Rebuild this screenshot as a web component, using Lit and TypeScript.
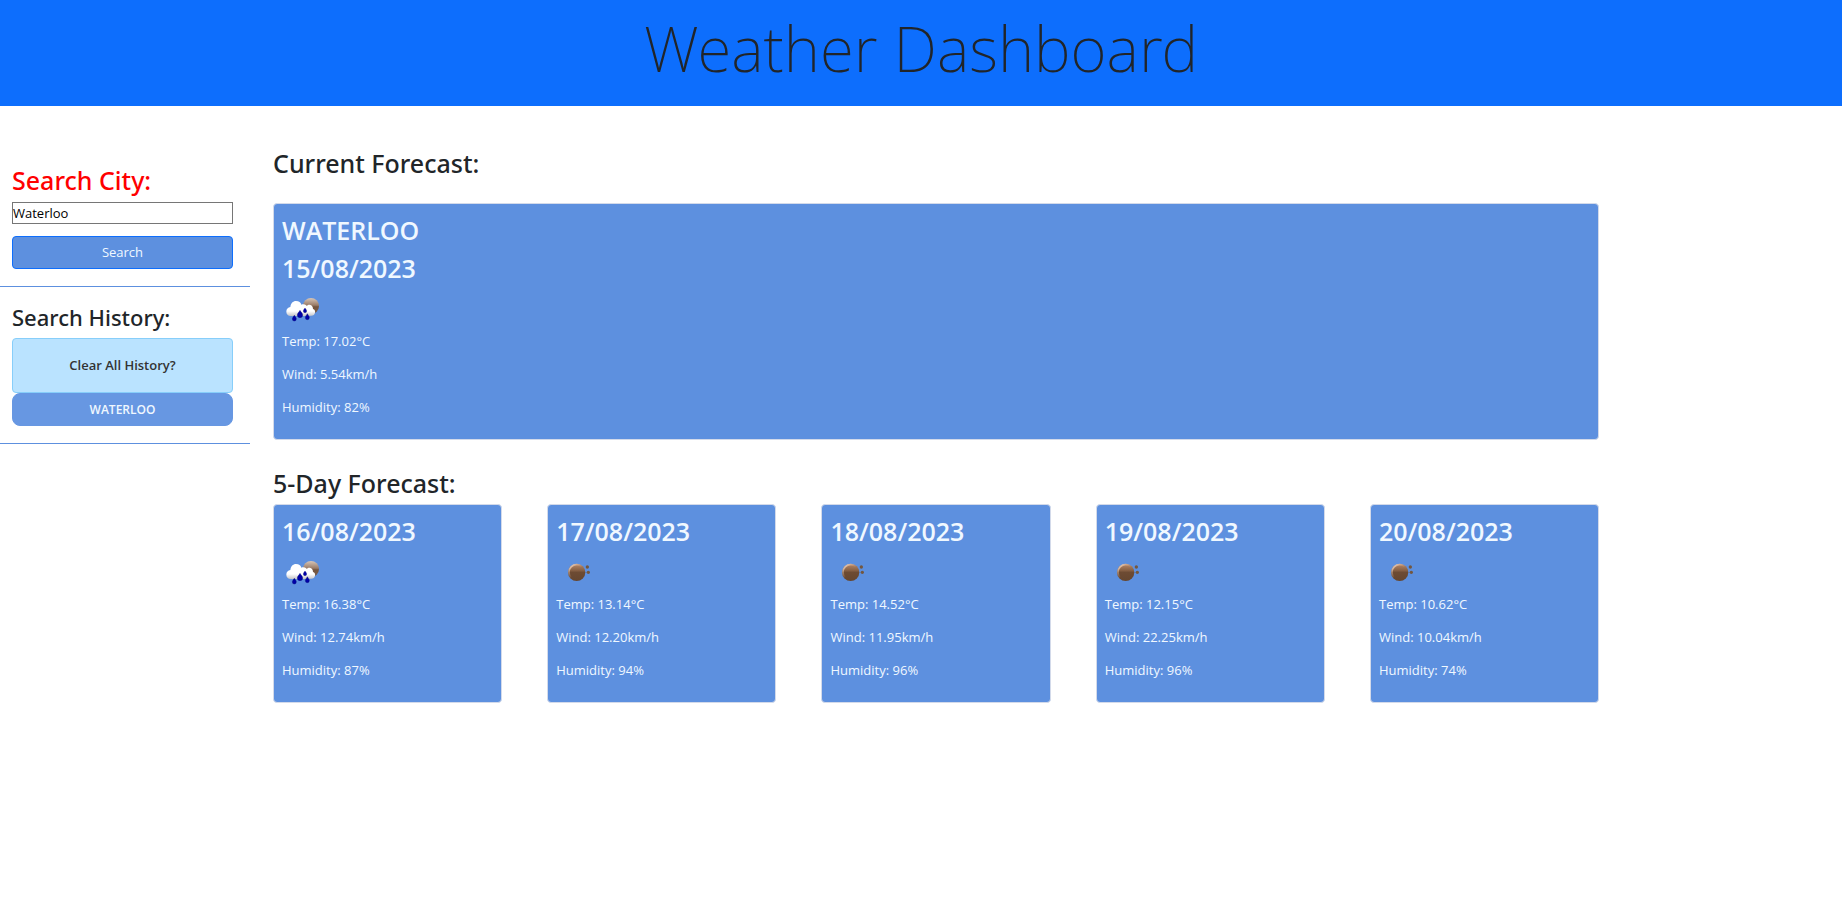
import { LitElement, html, css, svg } from "lit";
import { customElement, property, state } from "lit/decorators.js";

interface Reading {
  city?: string;
  date: string;
  sky: "rain" | "clear";
  temp: string;
  wind: string;
  humidity: string;
}

const CURRENT: Reading = {
  city: "WATERLOO", date: "15/08/2023", sky: "rain", temp: "17.02", wind: "5.54", humidity: "82",
};

const DAYS: Reading[] = [
  { date: "16/08/2023", sky: "rain", temp: "16.38", wind: "12.74", humidity: "87" },
  { date: "17/08/2023", sky: "clear", temp: "13.14", wind: "12.20", humidity: "94" },
  { date: "18/08/2023", sky: "clear", temp: "14.52", wind: "11.95", humidity: "96" },
  { date: "19/08/2023", sky: "clear", temp: "12.15", wind: "22.25", humidity: "96" },
  { date: "20/08/2023", sky: "clear", temp: "10.62", wind: "10.04", humidity: "74" },
];

@customElement("sky-icon")
class SkyIcon extends LitElement {
  @property() sky: "rain" | "clear" = "clear";

  static styles = css`
    :host { display: block; width: 40px; height: 40px; }
    .icon { display: block; width: 100%; height: 100%; }
  `;

  private defs() {
    return svg`<defs>
      <linearGradient id="moon" x1="0" y1="0" x2="0" y2="1">
        <stop offset="0" stop-color="#b98a6a"/><stop offset="0.4" stop-color="#865f43"/>
        <stop offset="0.5" stop-color="#6d4b33"/><stop offset="1" stop-color="#65462f"/>
      </linearGradient>
      <linearGradient id="gloss" x1="0" y1="0" x2="1" y2="1">
        <stop offset="0" stop-color="#fff0e4" stop-opacity="0.9"/><stop offset="0.5" stop-color="#e8b898" stop-opacity="0"/>
      </linearGradient>
      <linearGradient id="haze" x1="0" y1="0" x2="0" y2="1">
        <stop offset="0" stop-color="#d8c6b8"/><stop offset="0.45" stop-color="#9a7c68"/>
        <stop offset="0.55" stop-color="#73543e"/><stop offset="1" stop-color="#7c604c"/>
      </linearGradient>
      <linearGradient id="cloud" x1="0" y1="35" x2="0" y2="83" gradientUnits="userSpaceOnUse">
        <stop offset="0" stop-color="#fff"/><stop offset="0.65" stop-color="#fff"/><stop offset="1" stop-color="#bcbcc0"/>
      </linearGradient>
    </defs>`;
  }

  render() {
    if (this.sky === "rain") {
      return html`<svg class="icon" viewBox="6 6 120 120" role="img" aria-label="Rain">${this.defs()}
        <circle cx="93" cy="51" r="24" fill="url(#haze)"/>
        <path d="M66 81c-2-11 5-15 9-16c0-12 7-19 14-18c7 1 10 7 10 13c5 1 7 5 6 11c-1 6-5 9-11 9z" fill="url(#cloud)"/>
        <path d="M32 81c-8 0-13-6-13-13c0-8 5-13 12-14c1-11 8-18 17-18c9 0 14 4 16 11c9-4 19 2 20 12c0 4-2 7-4 9c4 8-1 13-8 13z" fill="url(#cloud)"/>
        <g fill="#0000a8" stroke="#00006a" stroke-width="1">
          <path d="M43 79c3 5 6 7 6 11a6 6 0 0 1-12 0c0-4 3-6 6-11z"/>
          <path d="M60 64c4 7 8 9 8 14a8 8 0 0 1-16 0c0-5 4-7 8-14z"/>
          <path d="M75 57c2 4 5 5 5 9a5 5 0 0 1-10 0c0-4 3-5 5-9z"/>
          <path d="M82 74c3 5 6 8 6 12a6 6 0 0 1-12 0c0-4 3-7 6-12z"/>
        </g>
      </svg>`;
    }
    return html`<svg class="icon" viewBox="-12 9 120 120" role="img" aria-label="Clear">${this.defs()}
      <circle cx="50" cy="64" r="26" fill="url(#moon)"/>
      <circle cx="50" cy="64" r="23" fill="none" stroke="url(#gloss)" stroke-width="5"/>
      <circle cx="82" cy="48" r="5" fill="#73573f"/>
      <circle cx="85" cy="64" r="5" fill="#73573f"/>
    </svg>`;
  }
}

@customElement("weather-card")
class WeatherCard extends LitElement {
  @property({ attribute: false }) reading!: Reading;

  static styles = css`
    :host {
      display: block; box-sizing: border-box; min-width: 0; padding: 7px 8px 9px;
      border: 1px solid #d3daea; border-radius: 4px;
      background: #5d90df; color: aliceblue;
    }
    .title { margin: 0; font-size: 25px; font-weight: 600; line-height: 38px; }
    .icon { margin-top: 4px; }
    .line { margin: 0 0 12px; font-size: 13px; line-height: 21px; }
  `;

  render() {
    const r = this.reading;
    return html`
      ${r.city ? html`<h2 class="title">${r.city}</h2>` : null}
      <h2 class="title">${r.date}</h2>
      <sky-icon class="icon" .sky=${r.sky}></sky-icon>
      <p class="line">Temp: ${r.temp}°C</p>
      <p class="line">Wind: ${r.wind}km/h</p>
      <p class="line">Humidity: ${r.humidity}%</p>
    `;
  }
}

@customElement("app-root")
class AppRoot extends LitElement {
  @state() private city = "Waterloo";
  @state() private history = ["WATERLOO"];

  static styles = css`
    :host {
      display: block; min-height: 100vh; background: #fff; color: #212529;
      font-family: "Segoe UI", "Open Sans", "Noto Sans", sans-serif; font-size: 13px;
    }
    * { box-sizing: border-box; }
    .header { padding: 8px 16px 18px; background: #0d6efd; text-align: center; }
    .brand { margin: 0; font-family: "Segoe UI", "Noto Sans", sans-serif; font-size: 62px; font-weight: 200; line-height: 80px; }
    .layout { display: flex; align-items: flex-start; padding-top: 40px; }
    .sidebar { flex: 0 0 250px; }
    .panel {
      display: flex; flex-direction: column;
      padding: 16px 17px 17px 12px; border-bottom: 1px solid #5d90df;
    }
    .label, .subtitle, .heading { font-family: "Segoe UI", "Noto Sans", sans-serif; font-weight: 500; }
    .label { margin: 0 0 4px; font-size: 25px; line-height: 36px; color: red; }
    .field {
      height: 22px; padding: 0; border: 1px solid #767676; border-radius: 0;
      background: #fff; color: #000; font: inherit;
    }
    .btn {
      padding: 5px 12px; border: 1px solid #0d6efd; border-radius: 4px; background: #5d90df;
      color: aliceblue; font: inherit; line-height: 21px; cursor: pointer;
    }
    .search { margin-top: 12px; }
    .subtitle { margin: 0 0 7px; font-size: 22px; line-height: 28px; }
    .clear { padding: 16px 12px; border-color: #87cefa; background: #bae3ff; color: #333; font-weight: 600; }
    .entry { border-color: #6797e2; border-radius: 8px; background: #6797e2; font-size: 12px; font-weight: 600; }
    .main { width: 72%; margin-left: 23px; }
    .heading { margin: 0; font-size: 25px; line-height: 34px; }
    .current { margin: 23px 0 26px; }
    .days { display: grid; grid-template-columns: repeat(5, minmax(0, 1fr)); gap: 45px; margin-top: 4px; }
  `;

  private search(e: Event) {
    e.preventDefault();
    const name = this.city.trim().toUpperCase();
    if (name && !this.history.includes(name)) this.history = [...this.history, name];
  }

  render() {
    return html`
      <header class="header"><h1 class="brand">Weather Dashboard</h1></header>
      <div class="layout">
        <aside class="sidebar">
          <form class="panel" @submit=${this.search}>
            <label class="label" for="city">Search City:</label>
            <input class="field" id="city" type="text" .value=${this.city}
              @input=${(e: Event) => (this.city = (e.target as HTMLInputElement).value)} />
            <button class="btn search" type="submit">Search</button>
          </form>
          <section class="panel">
            <h3 class="subtitle">Search History:</h3>
            <button class="btn clear" type="button" @click=${() => (this.history = [])}>Clear All History?</button>
            ${this.history.map((name) => html`
              <button class="btn entry" type="button" @click=${() => (this.city = name)}>${name}</button>`)}
          </section>
        </aside>
        <main class="main">
          <h2 class="heading">Current Forecast:</h2>
          <weather-card class="current" .reading=${CURRENT}></weather-card>
          <h2 class="heading">5-Day Forecast:</h2>
          <div class="days">
            ${DAYS.map((d) => html`<weather-card .reading=${d}></weather-card>`)}
          </div>
        </main>
      </div>
    `;
  }
}
